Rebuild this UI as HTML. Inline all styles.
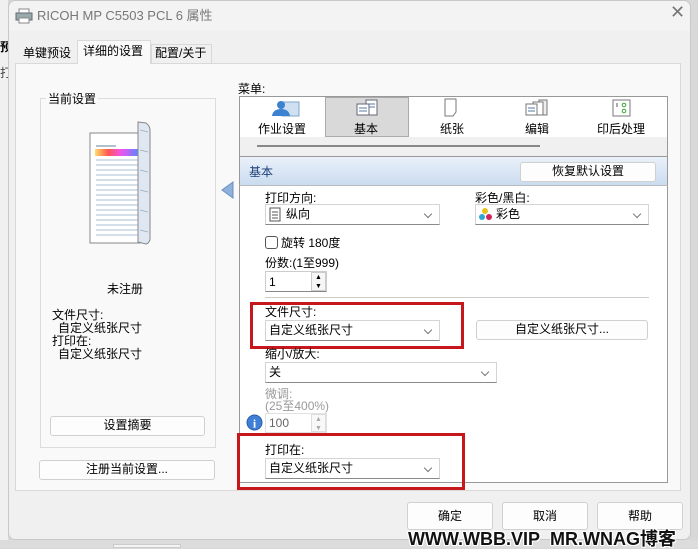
<!DOCTYPE html>
<html><head><meta charset="utf-8"><style>
*{margin:0;padding:0;box-sizing:border-box}
body{width:698px;height:548px;position:relative;overflow:hidden;background:#d8d8d8;font-family:"Liberation Sans","Noto Sans CJK SC",sans-serif;font-size:12px;color:#000}
.a{position:absolute}
.t{position:absolute;white-space:nowrap;font-size:12px;line-height:14px}
.btn{position:absolute;background:#fdfdfd;border:1px solid #d0d0d0;border-radius:3px;text-align:center;font-size:12px;line-height:17px}
.sel{position:absolute;background:#fff;border:1px solid #d4d4d4;border-bottom-color:#8a8a8a;font-size:12px;line-height:18px;padding-left:3px}
.sel:after{content:"";position:absolute;right:8px;top:6px;width:5px;height:5px;border-right:1px solid #777;border-bottom:1px solid #777;transform:rotate(45deg)}
.red{position:absolute;border:3px solid #c8161d}
</style></head><body>
<div class="a" style="left:0;top:0;width:8px;height:548px;background:#f0f0f0"></div>
<div class="t" style="left:0;top:40px;font-weight:bold">预</div>
<div class="t" style="left:0;top:66px;color:#444">打</div>
<div class="a" style="left:8px;top:0;width:683px;height:540px;background:#f0f0f0;border:1px solid #c8c8c8;border-radius:7px"></div>
<div class="a" style="left:9px;top:1px;width:681px;height:30px;background:#f3f3f3;border-radius:7px 7px 0 0"></div>
<svg class="a" style="left:15px;top:8px" width="18" height="16"><rect x="4" y="1" width="10" height="5" fill="#fff" stroke="#888"/><rect x="1" y="5" width="16" height="7" fill="#9aa" stroke="#667"/><rect x="4" y="10" width="10" height="5" fill="#fff" stroke="#888"/></svg>
<div class="t" style="left:37px;top:9px;font-size:13px;color:#777">RICOH MP C5503 PCL 6 属性</div>
<div class="t" style="left:670px;top:5px;font-size:18px;color:#777">✕</div>
<!-- tabs -->
<div class="t" style="left:23px;top:46px">单键预设</div>
<div class="a" style="left:77px;top:40px;width:74px;height:24px;background:#f9f9f9;border:1px solid #d9d9d9;border-bottom:none"></div>
<div class="t" style="left:83px;top:44px">详细的设置</div>
<div class="a" style="left:151px;top:44px;width:61px;height:20px;border:1px solid #d9d9d9;border-bottom:none;background:#f0f0f0"></div>
<div class="t" style="left:155px;top:46px">配置/关于</div>
<div class="a" style="left:15px;top:63px;width:666px;height:428px;background:#f9f9f9;border:1px solid #d9d9d9"></div>
<div class="a" style="left:78px;top:63px;width:72px;height:2px;background:#f9f9f9"></div>
<!-- left group -->
<div class="a" style="left:40px;top:98px;width:176px;height:350px;border:1px solid #dcdcdc"></div>
<div class="t" style="left:46px;top:92px;background:#f9f9f9;padding:0 2px">当前设置</div>
<svg class="a" style="left:86px;top:120px" width="70" height="128">
<rect x="4" y="13" width="50" height="110" fill="#fff" stroke="#888"/>
<line x1="10" y1="26" x2="30" y2="26" stroke="#9ab" stroke-width="1.5"/>
<defs><linearGradient id="g"><stop offset="0" stop-color="#fd6"/><stop offset=".3" stop-color="#f55"/><stop offset=".6" stop-color="#e5e"/><stop offset="1" stop-color="#58f"/></linearGradient></defs>
<rect x="9" y="29" width="44" height="7" fill="url(#g)"/>
<g stroke="#a9bfd4">
<line x1="10" y1="40" x2="52" y2="40"/><line x1="10" y1="45" x2="52" y2="45"/><line x1="10" y1="50" x2="52" y2="50"/><line x1="10" y1="55" x2="52" y2="55"/><line x1="10" y1="60" x2="52" y2="60"/><line x1="10" y1="65" x2="52" y2="65"/><line x1="10" y1="70" x2="52" y2="70"/><line x1="10" y1="75" x2="52" y2="75"/><line x1="10" y1="80" x2="52" y2="80"/><line x1="10" y1="85" x2="52" y2="85"/><line x1="10" y1="90" x2="52" y2="90"/><line x1="10" y1="95" x2="52" y2="95"/><line x1="10" y1="100" x2="52" y2="100"/><line x1="10" y1="105" x2="52" y2="105"/><line x1="10" y1="110" x2="52" y2="110"/><line x1="10" y1="115" x2="52" y2="115"/></g>
<path d="M52 2 L60 3 Q64 6 64 10 L64 120 Q62 124 60 124 L52 122 Z" fill="#dfe8f2" stroke="#888"/>
<g stroke="#9ab" stroke-width="0.8"><line x1="54" y1="10" x2="62" y2="12"/><line x1="54" y1="30" x2="62" y2="32"/><line x1="54" y1="50" x2="62" y2="52"/><line x1="54" y1="70" x2="62" y2="72"/><line x1="54" y1="90" x2="62" y2="92"/><line x1="54" y1="110" x2="62" y2="112"/></g>
</svg>
<div class="t" style="left:107px;top:282px">未注册</div>
<div class="t" style="left:52px;top:308px">文件尺寸:</div>
<div class="t" style="left:58px;top:321px">自定义纸张尺寸</div>
<div class="t" style="left:52px;top:334px">打印在:</div>
<div class="t" style="left:58px;top:347px">自定义纸张尺寸</div>
<div class="btn" style="left:50px;top:416px;width:155px;height:20px">设置摘要</div>
<div class="btn" style="left:39px;top:460px;width:176px;height:20px">注册当前设置...</div>
<svg class="a" style="left:221px;top:181px" width="13" height="18"><path d="M12 1 L1 9 L12 17 Z" fill="#8fb1dc" stroke="#6a8fc0"/></svg>
<!-- menu -->
<div class="t" style="left:238px;top:82px">菜单:</div>
<div class="a" style="left:239px;top:96px;width:429px;height:61px;background:#fff;border:1px solid #999"></div>
<div class="a" style="left:240px;top:137px;width:427px;height:19px;background:#f0f0f0"></div>
<div class="a" style="left:257px;top:145px;width:283px;height:2px;background:#888"></div>
<div class="a" style="left:325px;top:97px;width:84px;height:40px;background:#d9d9d9;border:1px solid #aaa"></div>
<svg class="a" style="left:268px;top:99px" width="34" height="20"><rect x="14" y="3" width="17" height="14" fill="#cfe0f0" stroke="#7fa6cc"/><circle cx="13" cy="6" r="4" fill="#3d82d0"/><path d="M4 17 Q5 10 13 10 Q21 10 22 17Z" fill="#3d82d0"/></svg>
<svg class="a" style="left:354px;top:98px" width="26" height="20"><rect x="12" y="2" width="11" height="15" fill="#fff" stroke="#667"/><rect x="3" y="6" width="12" height="11" fill="#fff" stroke="#667"/><g stroke="#57a"><line x1="5" y1="10" x2="13" y2="10"/><line x1="5" y1="13" x2="13" y2="13"/><line x1="15" y1="6" x2="21" y2="6"/><line x1="15" y1="9" x2="21" y2="9"/></g></svg>
<svg class="a" style="left:442px;top:98px" width="20" height="20"><path d="M3 1 H14 V14 L11 18 H3Z" fill="#fff" stroke="#777"/></svg>
<svg class="a" style="left:523px;top:98px" width="28" height="20"><rect x="16" y="2" width="8" height="15" fill="#eee" stroke="#777"/><rect x="10" y="4" width="10" height="13" fill="#fff" stroke="#777"/><rect x="3" y="6" width="11" height="11" fill="#fff" stroke="#777"/><g stroke="#57a"><line x1="5" y1="10" x2="12" y2="10"/><line x1="5" y1="13" x2="12" y2="13"/></g></svg>
<svg class="a" style="left:610px;top:98px" width="24" height="20"><rect x="3" y="2" width="17" height="16" fill="#fff" stroke="#777"/><circle cx="14" cy="7" r="1.8" fill="none" stroke="#3a3"/><circle cx="14" cy="13" r="1.8" fill="none" stroke="#3a3"/><line x1="7" y1="5" x2="7" y2="9" stroke="#555"/></svg>
<div class="t" style="left:258px;top:122px">作业设置</div>
<div class="t" style="left:354px;top:122px">基本</div>
<div class="t" style="left:440px;top:122px">纸张</div>
<div class="t" style="left:525px;top:122px">编辑</div>
<div class="t" style="left:597px;top:122px">印后处理</div>
<!-- header -->
<div class="a" style="left:239px;top:157px;width:429px;height:29px;background:linear-gradient(#eaf1fa,#c9dbef);border-left:1px solid #999;border-right:1px solid #999"></div>
<div class="t" style="left:249px;top:165px;color:#1e3f7a">基本</div>
<div class="btn" style="left:520px;top:162px;width:136px;height:20px">恢复默认设置</div>
<div class="a" style="left:239px;top:185px;width:429px;height:298px;background:#fff;border:1px solid #999;border-top:1px solid #bbb"></div>
<div class="t" style="left:265px;top:191px">打印方向:</div>
<div class="sel" style="left:265px;top:204px;width:175px;height:21px;padding-left:20px">纵向</div>
<svg class="a" style="left:268px;top:207px" width="14" height="15"><rect x="2" y="1" width="10" height="13" fill="#fff" stroke="#555"/><g stroke="#555"><line x1="4" y1="5" x2="10" y2="5"/><line x1="4" y1="8" x2="10" y2="8"/><line x1="4" y1="11" x2="10" y2="11"/></g></svg>
<div class="t" style="left:475px;top:191px">彩色/黑白:</div>
<div class="sel" style="left:475px;top:204px;width:174px;height:21px;padding-left:20px">彩色</div>
<svg class="a" style="left:478px;top:207px" width="16" height="15"><circle cx="7" cy="4" r="3" fill="#e8c21c"/><circle cx="4" cy="10" r="3" fill="#2ea6d6"/><circle cx="11" cy="10" r="3" fill="#d0245a"/></svg>
<div class="a" style="left:265px;top:236px;width:13px;height:13px;border:1px solid #555;border-radius:3px;background:#fff"></div>
<div class="t" style="left:281px;top:236px">旋转 180度</div>
<div class="t" style="left:265px;top:256px">份数:(1至999)</div>
<div class="a" style="left:265px;top:271px;width:62px;height:21px;background:#fff;border:1px solid #ccc;border-bottom-color:#888"></div>
<div class="t" style="left:269px;top:275px">1</div>
<div class="a" style="left:311px;top:272px;width:15px;height:19px;border:1px solid #ccc;background:#f6f6f6;font-size:7px;text-align:center;line-height:9px">▲<br>▼</div>
<div class="a" style="left:265px;top:297px;width:384px;height:1px;background:#ccc"></div>
<div class="t" style="left:265px;top:305px">文件尺寸:</div>
<div class="sel" style="left:265px;top:320px;width:175px;height:21px">自定义纸张尺寸</div>
<div class="btn" style="left:476px;top:320px;width:172px;height:20px">自定义纸张尺寸...</div>
<div class="red" style="left:250px;top:302px;width:214px;height:47px"></div>
<div class="t" style="left:265px;top:347px">缩小/放大:</div>
<div class="sel" style="left:265px;top:362px;width:232px;height:21px">关</div>
<div class="t" style="left:265px;top:387px;color:#999">微调:</div>
<div class="t" style="left:265px;top:399px;color:#999">(25至400%)</div>
<svg class="a" style="left:246px;top:414px" width="17" height="17"><circle cx="8.5" cy="8.5" r="7.5" fill="#3f7fd6" stroke="#2a5ea8"/><text x="8.5" y="13.5" font-size="12" font-weight="bold" fill="#fff" text-anchor="middle" font-family="Liberation Serif">i</text></svg>
<div class="a" style="left:265px;top:413px;width:62px;height:20px;background:#fff;border:1px solid #e2e2e2"></div>
<div class="t" style="left:269px;top:416px;color:#666">100</div>
<div class="a" style="left:311px;top:414px;width:15px;height:18px;border:1px solid #ddd;background:#f8f8f8;font-size:7px;color:#aaa;text-align:center;line-height:9px">▲<br>▼</div>
<div class="t" style="left:265px;top:443px">打印在:</div>
<div class="sel" style="left:265px;top:458px;width:175px;height:21px">自定义纸张尺寸</div>
<div class="red" style="left:237px;top:433px;width:228px;height:57px"></div>
<!-- bottom buttons -->
<div class="btn" style="left:407px;top:502px;width:86px;height:28px;line-height:26px">确定</div>
<div class="btn" style="left:502px;top:502px;width:86px;height:28px;line-height:26px">取消</div>
<div class="btn" style="left:597px;top:502px;width:86px;height:28px;line-height:26px">帮助</div>
<div class="a" style="left:0;top:540px;width:698px;height:8px;background:#dcdcdc"></div>
<div class="a" style="left:113px;top:544px;width:68px;height:4px;background:#f4f4f4;border:1px solid #ccc"></div>
<div class="t" style="left:408px;top:529px;font-size:18px;line-height:20px;font-weight:bold;color:#111;text-shadow:-1px -1px 0 #fff,1px -1px 0 #fff,-1px 1px 0 #fff,1px 1px 0 #fff">WWW.WBB.VIP&nbsp; MR.WNAG博客</div>
</body></html>
